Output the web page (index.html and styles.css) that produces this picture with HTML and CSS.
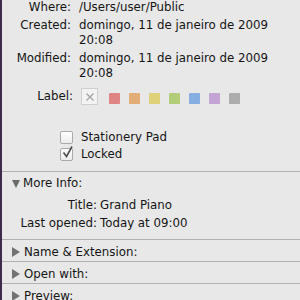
FILE: index.html
```html
<!DOCTYPE html>
<html lang="en">
<head>
<meta charset="UTF-8">
<title>Info</title>
<link rel="stylesheet" href="styles.css">
</head>
<body>

<div class="panel">
    <!-- General info -->
    <div class="general">
        <div class="info-grid">
            <span class="key">Where:</span>
            <span class="val">/Users/user/Public</span>
            <span class="key">Created:</span>
            <span class="val">domingo, 11 de janeiro de 2009<br>20:08</span>
            <span class="key">Modified:</span>
            <span class="val">domingo, 11 de janeiro de 2009<br>20:08</span>
        </div>

        <div class="label-row">
            <span class="key">Label:</span>
            <div class="labels">
                <span class="no-label">
                    <svg width="10" height="10" viewBox="0 0 10 10"><path d="M1.5 1.5 L8.5 8.5 M8.5 1.5 L1.5 8.5" stroke="#a0a0a0" stroke-width="1.2"/></svg>
                </span>
                <span class="swatch red"></span>
                <span class="swatch orange"></span>
                <span class="swatch yellow"></span>
                <span class="swatch green"></span>
                <span class="swatch blue"></span>
                <span class="swatch purple"></span>
                <span class="swatch grey"></span>
            </div>
        </div>

        <div class="checks">
            <div class="check-row"><span class="checkbox"></span>Stationery Pad</div>
            <div class="check-row">
                <span class="checkbox">
                    <svg width="13" height="13" viewBox="0 0 13 13"><path d="M2.5 6.5 L5.5 10.5 L11 0.5" fill="none" stroke="#4d4d4d" stroke-width="1.6"/></svg>
                </span>Locked
            </div>
        </div>
    </div>

    <!-- More Info (open) -->
    <div class="section">
        <div class="section-title"><span class="tri-down"></span>More Info:</div>
        <div class="more-grid">
            <span class="key">Title:</span>
            <span class="val">Grand Piano</span>
            <span class="key">Last opened:</span>
            <span class="val">Today at 09:00</span>
        </div>
    </div>

    <!-- Closed sections -->
    <div class="section closed">
        <div class="section-title"><span class="tri-right"></span>Name &amp; Extension:</div>
    </div>
    <div class="section closed">
        <div class="section-title"><span class="tri-right"></span>Open with:</div>
    </div>
    <div class="section closed">
        <div class="section-title"><span class="tri-right"></span>Preview:</div>
    </div>
</div>

</body>
</html>
```

FILE: styles.css
```css
body {
    margin: 0;
    padding: 0;
    background-color: #e8e8e8;
    font-family: "DejaVu Sans", sans-serif;
    font-size: 11.8px;
    line-height: 15px;
    color: #141414;
}

.panel {
    border-left: 2px solid #3f2b4c;
    min-height: 300px;
    box-sizing: border-box;
    overflow: hidden;
}

.general {
    padding-bottom: 9px;
}

/* Where / Created / Modified */
.info-grid {
    display: grid;
    grid-template-columns: 69px auto;
    column-gap: 8px;
    row-gap: 3px;
}

.key {
    text-align: right;
    white-space: nowrap;
}

.val {
    white-space: nowrap;
}

/* Label colours */
.label-row {
    display: grid;
    grid-template-columns: 71px auto;
    column-gap: 8px;
    align-items: center;
    margin-top: 7px;
    height: 17px;
}

.labels {
    display: flex;
    align-items: center;
}

.no-label {
    width: 15px;
    height: 15px;
    border: 1px solid #cfcfcf;
    background-color: #f3f3f3;
    display: flex;
    align-items: center;
    justify-content: center;
    margin-right: 11px;
}

.swatch {
    width: 11px;
    height: 11px;
    margin-right: 9px;
    margin-top: 4px;
    border-radius: 1px;
}

.red { background-color: #e08585; }
.orange { background-color: #e3ad77; }
.yellow { background-color: #ddd27a; }
.green { background-color: #b3cc78; }
.blue { background-color: #86aee2; }
.purple { background-color: #c3a4d4; }
.grey { background-color: #adadad; }

/* Checkboxes */
.checks {
    margin-top: 25px;
    padding-left: 58px;
    display: flex;
    flex-direction: column;
    gap: 2px;
}

.check-row {
    display: flex;
    align-items: center;
}

.checkbox {
    width: 11px;
    height: 11px;
    border: 1px solid #a9a9a9;
    border-radius: 2px;
    background: linear-gradient(#ffffff, #ececec);
    margin-right: 8px;
    position: relative;
}

.checkbox svg {
    position: absolute;
    left: 0;
    top: -3px;
}

/* Sections */
.section {
    border-top: 1px solid #b1b1b1;
    padding: 4px 0 8px 0;
}

.section.closed {
    padding: 5px 0 1px 0;
}

.section-title {
    display: flex;
    align-items: center;
    padding-left: 10px;
}

.tri-down {
    width: 0;
    height: 0;
    border-left: 4.5px solid transparent;
    border-right: 4.5px solid transparent;
    border-top: 8px solid #6b6b6b;
    margin-right: 3px;
    margin-top: 1px;
}

.tri-right {
    width: 0;
    height: 0;
    border-top: 5px solid transparent;
    border-bottom: 5px solid transparent;
    border-left: 8px solid #727272;
    margin-right: 4px;
}

.more-grid {
    display: grid;
    grid-template-columns: 95px auto;
    column-gap: 3px;
    row-gap: 2.6px;
    margin-top: 7px;
}
```
